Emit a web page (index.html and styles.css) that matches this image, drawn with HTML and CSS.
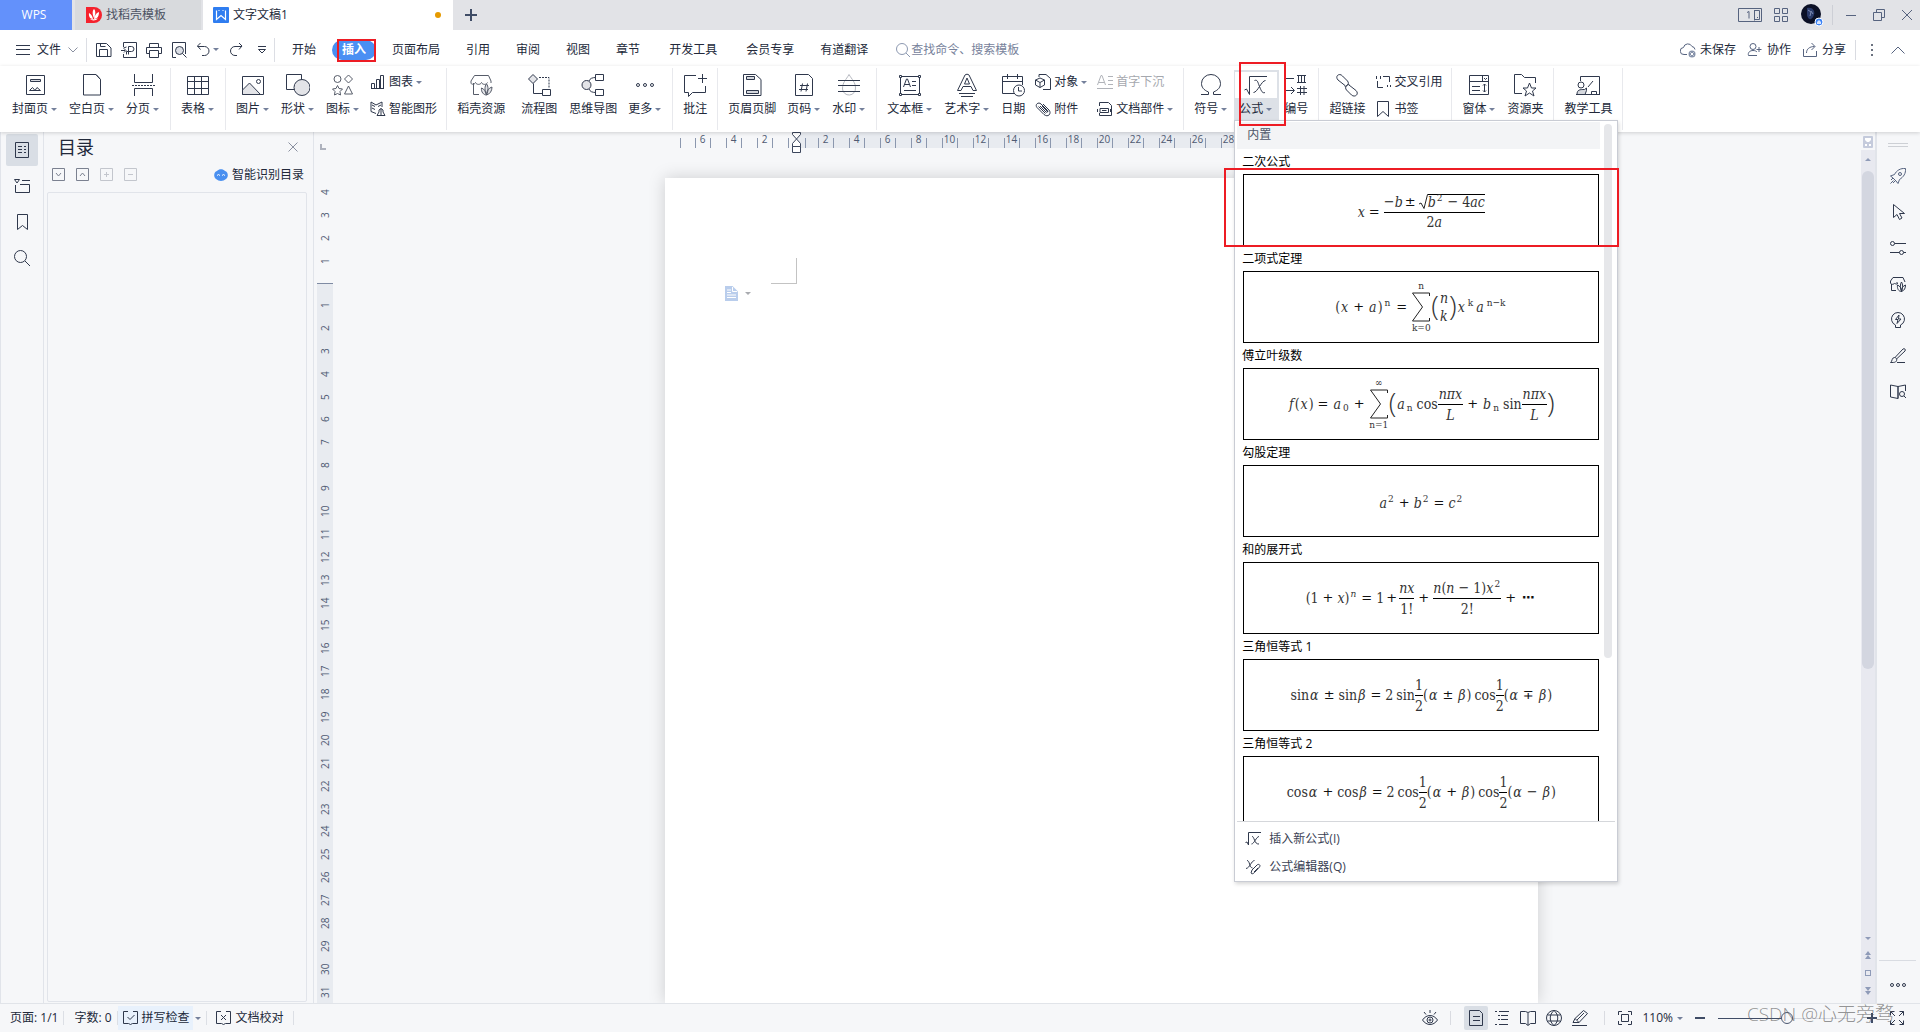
FILE: index.html
```html
<!DOCTYPE html>
<html lang="zh-CN">
<head>
<meta charset="utf-8">
<title>文字文稿1 - WPS</title>
<link rel="stylesheet" href="styles.css">
</head>
<body>
<header class="titlebar">
  <button class="home">WPS</button>
  <button class="tab tab-store">
    <svg class="logo" width="16" height="16" viewBox="0 0 16 16"><path fill="#f5222d" d="M0 0h8a8 8 0 0 1 0 16H0z"/><path fill="#fff" d="M8 2c2 2 1.500 6 0 9-1.500-3-2-7 0-9zM3 6c2 1 3.500 3 4 6-3 0-4.500-3-4-6zM13 5c0 4-1.500 7-5 7 .5-3 2-6 5-7zM4 12c1.500 2 6 2 8-.5-2 .5-5 1-8 .5z"/></svg>
    找稻壳模板
  </button>
  <button class="tab tab-doc">
    <svg class="logo" width="16" height="16" viewBox="0 0 16 16"><rect width="16" height="16" rx="1" fill="#2f7df0"/><path d="M3.500 3.500v9l4.500-4 4.500 4v-9M5.500 3.500h1m3 0h1" fill="none" stroke="#fff" stroke-width="1.200"/></svg>
    文字文稿1<span class="unsaved"></span>
  </button>
  <button class="plain newtab" aria-label="新建"><svg class="ic bold" width="12" height="12" viewBox="0 0 12 12"><path d="M6 0v12M0 6h12"/></svg></button>
  <div class="window-tools">
    <button class="plain" aria-label="窗口"><svg class="ic" width="24" height="14" viewBox="0 0 24 14"><path d="M.5.5h23v13H.5zM9 4.500l2-1v7M16.500 2v10.500M16.500 2.500h5v9h-5M19 9.500h1"/></svg></button>
    <button class="plain" aria-label="应用"><svg class="ic" width="14" height="14" viewBox="0 0 14 14"><path d="M.5.5h5v5h-5zM8.500.5h5v5h-5zM.5 8.500h5v5h-5zM8.500 8.500h5v5h-5z"/></svg></button>
    <button class="plain" aria-label="账号"><svg width="24" height="24" viewBox="0 0 24 24"><circle cx="11" cy="11" r="10" fill="#0b1026"/><path d="M7 5c3-1 6 0 7 3s-1 7-3 8-4-2-4-5z" fill="#2a3a6a"/><path d="M8 7l3 2-1 4M11 8l2 3" stroke="#7d8cb5" fill="none"/><circle cx="19" cy="19" r="4" fill="#3d83f5" stroke="#fff"/><path d="M17 21v-2l2-2 2 2v2z" fill="#d6e5ff"/></svg></button>
    <span class="sep"></span>
    <button class="plain" aria-label="最小化"><svg class="ic" width="12" height="12" viewBox="0 0 12 12"><path d="M1 6.500h10"/></svg></button>
    <button class="plain" aria-label="还原"><svg class="ic" width="12" height="12" viewBox="0 0 12 12"><path d="M.5 3.500h8v8h-8zM3.500 3V.5h8v8H9"/></svg></button>
    <button class="plain" aria-label="关闭"><svg class="ic" width="12" height="12" viewBox="0 0 12 12"><path d="M1 1l10 10M11 1L1 11"/></svg></button>
  </div>
</header>

<nav class="menubar">
  <button class="plain file"><svg class="ic" width="14" height="12" viewBox="0 0 14 12"><path d="M0 1.500h14M0 5.500h14M0 10.500h14"/></svg>文件<svg class="ic grey" width="10" height="6" viewBox="0 0 10 6"><path d="M.5.5L5 5 9.500.5"/></svg></button>
  <div class="quick">
    <button class="plain" aria-label="保存"><svg class="ic" width="16" height="16" viewBox="0 0 16 16"><path d="M.5 14.500V1.500h10l4.500 4.500v8.500zM4.500 1.500v3h5M3.500 14.500v-7h8v7"/></svg></button>
    <button class="plain" aria-label="输出为PDF"><svg class="ic" width="16" height="16" viewBox="0 0 16 16"><path d="M2.500 5V.5h13v15h-13V12M0 8.500h4M2.500 6l3-1M7.500 12.500v-8h3a2 2 0 0 1 0 5h-5v3M3 6.500l2 2-2 2"/></svg></button>
    <button class="plain" aria-label="打印"><svg class="ic" width="16" height="16" viewBox="0 0 16 16"><path d="M3.500 5V1.500h9V5M3.500 11.500h-3v-6h15v6h-3M3.500 8.500h9v7h-9z"/></svg></button>
    <button class="plain" aria-label="打印预览"><svg class="ic" width="16" height="16" viewBox="0 0 16 16"><path d="M5 15.500H1.500v-15h13V12"/><circle cx="8.500" cy="8.500" r="4" fill="#dcdfe6"/><path d="M11.500 11.500l4 4"/></svg></button>
    <button class="plain" aria-label="撤销"><svg class="ic" width="16" height="16" viewBox="0 0 16 16"><path d="M4.500 1l-3 3 3 3.500M1.500 4.500h7a4.500 4.500 0 0 1 0 9H6"/></svg></button>
    <span class="caret"></span>
    <button class="plain" aria-label="恢复"><svg class="ic" width="16" height="16" viewBox="0 0 16 16"><path d="M11 1l3 3-3 3.500M14 4.500H7a4.500 4.500 0 0 0 0 9h2"/></svg></button>
    <button class="plain" aria-label="自定义"><svg class="ic" width="10" height="8" viewBox="0 0 10 8"><path d="M1 .5h8M1.500 3.500L5 7l3.500-3.500z"/></svg></button>
  </div>
  <div class="menu-tabs">
    <button class="mtab">开始</button>
    <button class="mtab active"><span>插入</span></button>
    <button class="mtab">页面布局</button>
    <button class="mtab">引用</button>
    <button class="mtab">审阅</button>
    <button class="mtab">视图</button>
    <button class="mtab">章节</button>
    <button class="mtab roomy">开发工具</button>
    <button class="mtab">会员专享</button>
    <button class="mtab">有道翻译</button>
  </div>
  <label class="search"><svg class="ic" width="16" height="16" viewBox="0 0 16 16"><circle cx="7" cy="7" r="5.500"/><path d="M11 11l4 4"/></svg><input type="text" placeholder="查找命令、搜索模板" aria-label="查找命令"></label>
  <div class="share-tools">
    <button class="plain"><svg class="ic slate" width="16" height="16" viewBox="0 0 16 16"><path d="M7 12.500H4a3.500 3.500 0 0 1-.5-7 4.500 4.500 0 0 1 8.500-1 3.500 3.500 0 0 1 3 3"/><circle cx="12" cy="12" r="3.500" fill="#8793ab" stroke="none"/><path d="M10.500 10.500l3 3M13.500 10.500l-3 3" stroke="#fff"/></svg>未保存</button>
    <button class="plain"><svg class="ic slate" width="16" height="16" viewBox="0 0 16 16"><circle cx="6" cy="4.500" r="3"/><path d="M10 13.500H1.500c-1-3 1.500-5 4.500-5 2 0 3 .5 4 1.500M9.500 7.500h5M12 5v5"/></svg>协作</button>
    <button class="plain"><svg class="ic slate" width="16" height="16" viewBox="0 0 16 16"><path d="M1.500 7v7.500h13V9M4.500 11c0-4 3-6.500 8-6.500M9.500 1l3.500 3.500L9.500 8"/></svg>分享</button>
    <span class="sep"></span>
    <button class="plain" aria-label="更多"><svg width="10" height="14" viewBox="0 0 10 14" fill="#6b7280"><path d="M4 1h2v2H4zM4 6h2v2H4zM4 11h2v2H4z"/></svg></button>
    <button class="plain" aria-label="折叠"><svg class="ic slate" width="14" height="8" viewBox="0 0 14 8"><path d="M.5 7.500L7 1l6.500 6.500"/></svg></button>
  </div>
</nav>

<section class="ribbon">
  <div class="group">
    <button class="rb"><svg class="ic" width="24" height="24" viewBox="0 0 24 24"><path d="M3.500 2.500h18v19h-18z"/><path d="M7.500 6.500h10v2h-10z" fill="#d5d8de"/><path d="M6.500 17.500l3-3 2.500 3 2-3 3.500 3z"/></svg><span class="lb">封面页<i class="caret"></i></span></button>
    <button class="rb"><svg class="ic" width="24" height="24" viewBox="0 0 24 24"><path d="M3.500 1.500h12.500l4.500 5v15.500h-17zM16 1.500l4.500 5"/></svg><span class="lb">空白页<i class="caret"></i></span></button>
    <button class="rb"><svg class="ic" width="24" height="24" viewBox="0 0 24 24"><path d="M3.500 1v8.500h18V1M3.500 23v-7.500h18V23"/><path d="M1 12.500h23" stroke-dasharray="2 1"/></svg><span class="lb">分页<i class="caret"></i></span></button>
  </div>
  <div class="group">
    <button class="rb"><svg class="ic" width="24" height="24" viewBox="0 0 24 24"><path d="M1.500 3.500h21v18h-21zM1.500 8.500h21M1.500 15.500h21M8.500 8.500v13M15.500 3.500v18M8.500 3.500v5"/></svg><span class="lb">表格<i class="caret"></i></span></button>
  </div>
  <div class="group">
    <button class="rb"><svg class="ic" width="24" height="24" viewBox="0 0 24 24"><path d="M1.500 3.500h21v18h-21z"/><path d="M1.500 17l7-7 11 11.500h-18z" fill="#e3e4e8"/><circle cx="17.500" cy="8.500" r="2"/></svg><span class="lb">图片<i class="caret"></i></span></button>
    <button class="rb"><svg class="ic" width="24" height="24" viewBox="0 0 24 24"><path d="M.5 1.500h15v15H.5z"/><circle cx="16" cy="14.500" r="8" fill="#e3e4e8"/></svg><span class="lb">形状<i class="caret"></i></span></button>
    <button class="rb"><svg class="ic soft" width="24" height="24" viewBox="0 0 24 24"><circle cx="6.500" cy="6" r="3.500"/><path d="M17.500 2l4 4-4 4-4-4zM17.500 13l4 8h-8zM6.500 12.500l1.500 3 3.500.5-2.500 2.500.5 3.500-3-1.500-3 1.500.5-3.500L1.500 16l3.500-.5z"/></svg><span class="lb">图标<i class="caret"></i></span></button>
    <div class="stack">
      <button class="sb"><svg class="ic" width="16" height="16" viewBox="0 0 16 16"><path d="M1.500 9.500h3v5h-3zM6.500 5.500h3v9h-3zM10.500 1.500h3v13h-3zM14 14.500H1"/></svg>图表<i class="caret"></i></button>
      <button class="sb"><svg class="ic" width="16" height="16" viewBox="0 0 16 16"><path d="M6 12.500l-5-2V1l5 3 6-3v5M2 4l3 1.500M2 7l3 1.500M8 5.500L11 4"/><path d="M7 14.500l2-3.500v-2l2-1.500 2 1.500v2l2 3.500zM11 7.500v7"/></svg>智能图形</button>
    </div>
  </div>
  <div class="group">
    <button class="rb"><svg class="ic soft" width="24" height="24" viewBox="0 0 24 24"><path d="M10 21.500H4.500V10M22 10V8l-2.500-5.500h-14L2 8v2c0 1.500 3.500 2 4.500-.5 1 2.500 5 2.500 6 0 1 2.500 5 2.500 6 0"/><path d="M17.500 11c2 2 2 7 0 11-2-4-2-9 0-11zM12.500 15c3 1 4.500 4 5 7-3 0-5.500-3-5-7zM23 14c0 4-2 7-5.500 8 0-4 2-7 5.500-8z" fill="#e3e4e8"/></svg><span class="lb">稻壳资源</span></button>
    <button class="rb roomy"><svg class="ic" width="24" height="24" viewBox="0 0 24 24"><path d="M6 1.500l4.500 4.500L6 10.500 1.500 6z" fill="#e3e4e8"/><path d="M6.500 10.500v10h9M15.500 16.500h8v6h-8z"/><path d="M12 4.500h10v10" stroke-dasharray="2 1"/></svg><span class="lb">流程图</span></button>
    <button class="rb"><svg class="ic" width="24" height="24" viewBox="0 0 24 24"><circle cx="5.500" cy="12" r="4.500" fill="#e3e4e8"/><path d="M15 4.500c-4 0-6 1-7 3.500M15 19.500c-4 0-6-1-7-3.500M14.500 1.500h8v6h-8zM14.500 16.500h8v6h-8z"/></svg><span class="lb">思维导图</span></button>
    <button class="rb"><svg class="ic" width="24" height="24" viewBox="0 0 24 24"><circle cx="5" cy="12" r="1.500"/><circle cx="12" cy="12" r="1.500"/><circle cx="19" cy="12" r="1.500"/></svg><span class="lb">更多<i class="caret"></i></span></button>
  </div>
  <div class="group">
    <button class="rb"><svg class="ic" width="24" height="24" viewBox="0 0 24 24"><path d="M13 2.500H1.500v17h4v4l4-4h13V13M19.500 1v9M15 5.500h9"/></svg><span class="lb">批注</span></button>
  </div>
  <div class="group">
    <button class="rb"><svg class="ic" width="24" height="24" viewBox="0 0 24 24"><path d="M3.500 1.500h12l5.500 5v16H3.500z"/><path d="M6.500 3.500h8v3h-8zM6.500 17.500h12v3h-12z" fill="#d5d8de"/></svg><span class="lb">页眉页脚</span></button>
    <button class="rb"><svg class="ic" width="24" height="24" viewBox="0 0 24 24"><path d="M3.500 1.500h13l4 4v17h-17zM10.500 10.500l-1.500 8M15.500 10.500l-1.500 8M8 12.500h9M7 16.500h9"/></svg><span class="lb">页码<i class="caret"></i></span></button>
    <button class="rb"><svg class="ic" width="24" height="24" viewBox="0 0 24 24"><path d="M12 1.500c3 5 6.500 8 6.500 13.500a6.500 6.500 0 0 1-13 1C5.500 9 9 7 12 1.500z" stroke="#b5b8bf"/><path d="M1 7.500h22M1 12.500h22M1 18.500h22"/></svg><span class="lb">水印<i class="caret"></i></span></button>
  </div>
  <div class="group">
    <button class="rb"><svg class="ic" width="24" height="24" viewBox="0 0 24 24"><path d="M2.500 3.500h19v18h-19zM5.500 14l3-8h1l3 8M6.500 11.500h5M14 8.500h4M14 12.500h4M6 17.500h12"/><path d="M1.500 2.500h2v2h-2zM20.500 2.500h2v2h-2zM1.500 20.500h2v2h-2zM20.500 20.500h2v2h-2z" fill="#fff"/></svg><span class="lb">文本框<i class="caret"></i></span></button>
    <button class="rb"><svg class="ic" width="24" height="24" viewBox="0 0 24 24"><path d="M2.500 17.500L10 2c1-1 3-1 4 0l7.500 15.500h-3.500L16 13.500H8l-2 4zM9.500 11l2.500-6 2.500 6zM4 20.500h16M6 23.500h12"/></svg><span class="lb">艺术字<i class="caret"></i></span></button>
    <button class="rb"><svg class="ic" width="24" height="24" viewBox="0 0 24 24"><path d="M13 20.500H1.500v-17h20V12M1.500 8.500h20M6.500 1v5M16.500 1v5"/><circle cx="18" cy="17.500" r="5.500" fill="#fff"/><path d="M17.500 14v4h3.500"/></svg><span class="lb">日期</span></button>
    <div class="stack">
      <button class="sb"><svg class="ic" width="16" height="16" viewBox="0 0 16 16"><path d="M4 3V.5h7l4.500 4v11H8"/><path d="M5 4l4.500 2v5L5 13.500.5 11V6zM.5 6L5 8.500 9.500 6M5 8.500v5"/></svg>对象<i class="caret"></i></button>
      <button class="sb"><svg class="ic" width="16" height="16" viewBox="0 0 16 16"><path d="M5 5l6 6c1 1 2.500-.5 1.500-1.500L6 3C3.500.5-.5 3.500 2 6.500l7 7c4 3.500 8-1 5-4.500L8 3M3.500 5.500l7 7M7 5l6 6"/></svg>附件</button>
    </div>
    <div class="stack">
      <button class="sb" disabled><svg class="ic" width="16" height="16" viewBox="0 0 16 16"><path d="M.5 11L4 1.500h1L8.500 11M2 8.500h5M11 2.500h5M11 6.500h5M11 10.500h5M0 14.500h16"/></svg>首字下沉</button>
      <button class="sb"><svg class="ic" width="16" height="16" viewBox="0 0 16 16"><path d="M2.500 5V1.500h9l3 3v10h-12V12"/><path d="M3 7.500h8.500v4H3zM.5 8v3M13.500 8v3M5 9.500h4.500"/></svg>文档部件<i class="caret"></i></button>
    </div>
  </div>
  <div class="group">
    <button class="rb"><svg class="ic" width="24" height="24" viewBox="0 0 24 24"><path d="M2 21.500h7.500V19C4.500 17 2.500 14 2.500 10.500a9.500 9 0 0 1 19 0c0 3.500-2 6.500-7 8.500v2.500H22"/></svg><span class="lb">符号<i class="caret"></i></span></button>
    <div class="dropdown-host">
      <button class="rb open"><span class="ricon"><svg class="ic" width="24" height="24" viewBox="0 0 24 24"><path d="M.5 17l2-1 3 5.500V3.500H23M10.500 7.500c3-1 3 1 5 6s3 7 5.500 6M21.500 7.500c-4 0-8 12-12 12"/></svg></span><span class="lb">公式<i class="caret"></i></span></button>
      <div class="dropdown">
        <div class="gallery">
          <div class="gallery-list">
            <h2 class="gallery-head">内置</h2>
            <h3>二次公式</h3>
            <button class="formula low"><i>x</i><b>=</b><span class="frac"><span><b class="un">−</b><i>b</i><b class="tight">±</b><svg class="root" width="10" height="16" viewBox="0 0 10 16"><path d="M1 10l2-1 3 5.500L9.500.5h.5"/></svg><span class="radicand"><i>b</i><sup>2</sup><b>−</b>4<i>ac</i></span></span><span>2<i>a</i></span></span></button>
            <h3>二项式定理</h3>
            <button class="formula wide">(<i>x</i><b>+</b><i>a</i>)<sup>n</sup><b>=</b><span class="sum"><small>n</small><svg width="20" height="30" viewBox="0 0 20 30"><path d="M18.500 4V1H1.500l10 14L1.500 29h17v-3"/></svg><small>k=0</small></span><span class="paren">(</span><span class="binom"><i>n</i><i>k</i></span><span class="paren">)</span><i>x</i><sup>k</sup><i>a</i><sup>n−k</sup></button>
            <h3>傅立叶级数</h3>
            <button class="formula wide"><i>f</i>(<i>x</i>)<b>=</b><i>a</i><sub>0</sub><b>+</b><span class="sum"><small>∞</small><svg width="20" height="30" viewBox="0 0 20 30"><path d="M18.500 4V1H1.500l10 14L1.500 29h17v-3"/></svg><small>n=1</small></span><span class="paren">(</span><i>a</i><sub>n</sub><span class="fn">cos</span><span class="frac"><span><i>nπx</i></span><span><i>L</i></span></span><b>+</b><i>b</i><sub>n</sub><span class="fn">sin</span><span class="frac"><span><i>nπx</i></span><span><i>L</i></span></span><span class="paren">)</span></button>
            <h3>勾股定理</h3>
            <button class="formula low"><i>a</i><sup>2</sup><b>+</b><i>b</i><sup>2</sup><b>=</b><i>c</i><sup>2</sup></button>
            <h3>和的展开式</h3>
            <button class="formula">(1<b>+</b><i>x</i>)<sup><i>n</i></sup><b>=</b>1<b class="tight">+</b><span class="frac"><span><i>nx</i></span><span>1!</span></span><b>+</b><span class="frac"><span><i>n</i>(<i>n</i><b>−</b>1)<i>x</i><sup>2</sup></span><span>2!</span></span><b>+</b><b class="tight dots">⋯</b></button>
            <h3>三角恒等式 1</h3>
            <button class="formula wide">sin<i>α</i><b>±</b>sin<i>β</i><b>=</b>2<span class="fn">sin</span><span class="frac"><span>1</span><span>2</span></span>(<i>α</i><b>±</b><i>β</i>)<span class="fn">cos</span><span class="frac"><span>1</span><span>2</span></span>(<i>α</i><b>∓</b><i>β</i>)</button>
            <h3>三角恒等式 2</h3>
            <button class="formula wide">cos<i>α</i><b>+</b>cos<i>β</i><b>=</b>2<span class="fn">cos</span><span class="frac"><span>1</span><span>2</span></span>(<i>α</i><b>+</b><i>β</i>)<span class="fn">cos</span><span class="frac"><span>1</span><span>2</span></span>(<i>α</i><b>−</b><i>β</i>)</button>
          </div>
          <div class="gallery-scroll"><span></span></div>
        </div>
        <div class="dropdown-foot">
          <button><svg class="ic" width="16" height="16" viewBox="0 0 16 16"><path d="M.5 11.500l1.500-.5 1.500 3V1.500H16M7 5.500c2.500-.5 2 8 7 7.500M14 5.500c-2.500 0-5 7.500-7.500 7.500"/></svg>插入新公式(I)</button>
          <button><svg class="ic" width="16" height="16" viewBox="0 0 16 16"><path d="M2 1.500c3 0 2 7 5.500 7.500M9.500 1.500C6 2 5 9 1 9.500M6 14l1-3 5-5c1.500-1.500 4 0 2.500 2l-5 5.500c-1 1-2.500 2-3.500.5zM9 13l4-4"/></svg>公式编辑器(Q)</button>
        </div>
        <span class="mark mark-formula"></span>
      </div>
      <span class="mark mark-button"></span>
    </div>
    <button class="rb"><svg class="ic" width="24" height="24" viewBox="0 0 24 24"><path d="M1 5.500h9M1 17.500h9M7 14l3.500 3.500L7 21M13 2.500h9M13 9.500h9M14.500 2.500v7M17.500 2.500v7M20.500 2.500v7M16.500 13v9M20 13v9M13 15.500h10M13 19.500h10"/></svg><span class="lb">编号</span></button>
  </div>
  <div class="group">
    <button class="rb"><svg class="ic" width="24" height="24" viewBox="0 0 24 24"><path d="M10 12.500L3 7C-.5 3 4.500-.5 7.500 3l5 5c2.500 3-1 6-3 5M14 12l7 5.500c3.500 3.500-1 7.500-4.500 4.500l-5-5c-2.500-3 1-6.500 3-5"/></svg><span class="lb">超链接</span></button>
    <div class="stack">
      <button class="sb"><svg class="ic" width="16" height="16" viewBox="0 0 16 16"><path d="M1.500 2v2M5.500 2v2M1 4.500h1M5 4.500h1M2.500 7v6.500H8M8 2.500h6.500V8M12.500 11v2M15.500 11v2"/></svg>交叉引用</button>
      <button class="sb"><svg class="ic" width="16" height="16" viewBox="0 0 16 16"><path d="M2.500.5h11v15L8 10.500l-5.500 5z"/></svg>书签</button>
    </div>
  </div>
  <div class="group">
    <button class="rb"><svg class="ic" width="24" height="24" viewBox="0 0 24 24"><path d="M2.500 2.500h19v19h-19zM2.500 8.500h19M15.500 2.500v6M17 5l1.500 1.500L20 5M5 13.500h8M5 17.500h8M17.500 11v8M16 12.500l1.500-1.500 1.500 1.500M16 17.500l1.500 1.500 1.500-1.500"/></svg><span class="lb">窗体<i class="caret"></i></span></button>
    <button class="rb"><svg class="ic" width="24" height="24" viewBox="0 0 24 24"><path d="M9 20.500H1.500v-19h7l3 3h11V10M16.500 10l2 5h4.500l-3.500 3 1.500 5-4.500-3-4.500 3 1.500-5-3.500-3h4.500z"/></svg><span class="lb">资源夹</span></button>
  </div>
  <div class="group last">
    <button class="rb"><svg class="ic" width="24" height="24" viewBox="0 0 24 24"><path d="M4.500 8V3.500h19v18H10M12 14l5-6M15.500 21.500v-3h5v3M0 21.500h24"/><circle cx="5" cy="12" r="3"/><path d="M1 21.500c0-5 3-5 7.500-5l2-1.500v2.500l-1.500 4z" fill="#d5d8de"/></svg><span class="lb">教学工具</span></button>
  </div>
</section>

<main class="main">
  <aside class="left-rail">
    <button class="on" aria-label="目录"><svg class="ic" width="16" height="16" viewBox="0 0 16 16"><path d="M1.500.5h13v15h-13zM4 4.500h4M10 4.500h2M4 7.500h4M10 7.500h2M4 10.500h4M10 10.500h2"/></svg></button>
    <button aria-label="章节导航"><svg class="ic" width="16" height="16" viewBox="0 0 16 16"><path d="M.5 1.500h5L3 5zM8 2.500h8M1.500 7v7.500h14v-8H6"/></svg></button>
    <button aria-label="书签"><svg class="ic" width="16" height="16" viewBox="0 0 16 16"><path d="M3.500.5h10v15l-5-4-5 4z"/></svg></button>
    <button aria-label="查找"><svg class="ic" width="16" height="16" viewBox="0 0 16 16"><circle cx="6.500" cy="6.500" r="6"/><path d="M11 11l5 5"/></svg></button>
  </aside>
  <aside class="panel">
    <div class="panel-head"><h1>目录</h1><button class="plain" aria-label="关闭"><svg class="ic grey" width="10" height="10" viewBox="0 0 10 10"><path d="M.5.5l9 9M9.500.5l-9 9"/></svg></button></div>
    <div class="panel-tools">
      <button class="plain" aria-label="展开"><svg class="ic mid" width="14" height="14" viewBox="0 0 14 14"><path d="M.5.5h12v12H.5zM4 5l2.500 3L9 5"/></svg></button>
      <button class="plain" aria-label="收起"><svg class="ic mid" width="14" height="14" viewBox="0 0 14 14"><path d="M.5.5h12v12H.5zM4 8l2.500-3L9 8"/></svg></button>
      <button class="plain" aria-label="升级"><svg class="ic faint" width="14" height="14" viewBox="0 0 14 14"><path d="M.5.5h12v12H.5zM4 6.500h5M6.500 4v5"/></svg></button>
      <button class="plain" aria-label="降级"><svg class="ic faint" width="14" height="14" viewBox="0 0 14 14"><path d="M.5.5h12v12H.5zM4 6.500h5"/></svg></button>
      <button class="plain smart"><svg width="14" height="12" viewBox="0 0 14 12"><path d="M3 2c2-2.500 6-2.500 8 0 3 .5 4 6 1 8-3 2.500-7 2.500-10 0-3-2-2-7.500 1-8z" fill="#4a90f0"/><path d="M3 6.500l1.500-1 1.500 1M8 6.500l1.500-1 1.500 1" stroke="#fff" fill="none"/></svg>智能识别目录</button>
    </div>
    <div class="outline"></div>
  </aside>
  <section class="editor">
    <div class="vruler">
      <div class="vr-top"><span class="corner"></span><div class="vr-above"><span>4</span><span>3</span><span>2</span><span>1</span></div></div>
      <div class="vr-body"><span>1</span><span>2</span><span>3</span><span>4</span><span>5</span><span>6</span><span>7</span><span>8</span><span>9</span><span>10</span><span>11</span><span>12</span><span>13</span><span>14</span><span>15</span><span>16</span><span>17</span><span>18</span><span>19</span><span>20</span><span>21</span><span>22</span><span>23</span><span>24</span><span>25</span><span>26</span><span>27</span><span>28</span><span>29</span><span>30</span><span>31</span></div>
    </div>
    <div class="canvas">
      <div class="paper">
        <div class="hruler">
          <span class="hr-first"></span><span>6</span><span>4</span><span>2</span>
          <div class="hr-body"><svg class="indent" width="11" height="22" viewBox="0 0 11 22"><path d="M1.500.5h8v2l-4 4.500 4 4.500v3h-8v-3l4-4.500-4-4.500zM1.500 14.500h8v6h-8z"/></svg><span>2</span><span>4</span><span>6</span><span>8</span><span>10</span><span>12</span><span>14</span><span>16</span><span>18</span><span>20</span><span>22</span><span>24</span><span>26</span><span>28</span></div>
        </div>
        <article class="page">
          <div class="crop"></div>
          <button class="plain paste" aria-label="页面选项"><svg width="13" height="15" viewBox="0 0 13 15"><path d="M0 0h7.500L13 5.500V15H0z" fill="#b9cdec"/><path d="M2 4h4M2 6.500h4M2 9h9M2 11.500h9M7.500 1v4.500H12" stroke="#fff" fill="none"/></svg><i class="caret grey"></i></button>
        </article>
      </div>
    </div>
    <div class="vscroll">
      <svg width="12" height="14" viewBox="0 0 12 14"><rect x="1" y="1" width="10" height="12" rx="1" fill="#c5cbdc"/><path d="M3 3h6v2L7 7H5L3 5zM3 9h2v2H3zM7 9h2v2H7z" fill="#fff"/></svg>
      <div class="track">
        <svg width="8" height="5" viewBox="0 0 8 5"><path d="M1 4h6L4 1z"/></svg>
        <span class="thumb"></span>
        <div class="steps">
          <svg width="8" height="5" viewBox="0 0 8 5"><path d="M1 1h6L4 4z"/></svg>
          <svg width="8" height="8" viewBox="0 0 8 8"><path d="M1 4h6L4 0zM1 8h6L4 4z"/></svg>
          <svg width="8" height="8" viewBox="0 0 8 8"><rect x="1.500" y="1.500" width="5" height="5" fill="none" stroke="#8f9bb8"/></svg>
          <svg width="8" height="8" viewBox="0 0 8 8"><path d="M1 0h6L4 4zM1 4h6L4 8z"/></svg>
        </div>
      </div>
    </div>
  </section>
  <aside class="right-rail">
    <span class="grip"></span>
    <button aria-label="稻壳"><svg class="ic slate" width="16" height="16" viewBox="0 0 16 16"><path d="M15.500.5c.5 5-2 8.500-6 11L8 15.500l-2-2.500-3-3L.5 8l4-1.500c2-4 6-6.500 11-6zM1 12l2-2M3 15l2.500-2.500M.5 15.500l3-3"/><circle cx="10" cy="6" r="1.500"/></svg></button>
    <button aria-label="选择"><svg class="ic" width="16" height="16" viewBox="0 0 16 16"><path d="M3.500.5v13l3.500-3 2.500 5 2.500-1.500-2.500-4.500h5z"/></svg></button>
    <button aria-label="设置"><svg class="ic" width="16" height="16" viewBox="0 0 16 16"><circle cx="2.500" cy="3.500" r="2"/><circle cx="11.500" cy="12.500" r="2"/><path d="M4.500 3.500H16M0 12.500h9.500M13.500 12.500H16"/></svg></button>
    <button aria-label="稻壳资源"><svg class="ic" width="16" height="16" viewBox="0 0 16 16"><path d="M6 14.500H1.500V8M15 6l-2-4.500H3L.5 5v2c0 1.500 3.500 2 4 0M7 7.500V6M4.500 7c1 1.500 2.500 1.500 3.500 0"/><path d="M11.500 6c1.500 2 1.500 6 0 9.500-1.500-3.500-1.500-7.500 0-9.500zM7.500 9c2.500 1 4 3.500 4 6.500-3 0-4.500-3-4-6.500zM15.500 9c0 3-1 5.500-4 6.500 0-3 1-5.500 4-6.500z"/></svg></button>
    <button aria-label="灵感"><svg class="ic" width="16" height="16" viewBox="0 0 16 16"><path d="M5.500 15.500V13a6.500 6.500 0 1 1 5 0v2.500zM9 3L5.500 7.500H8L7 11.500 11 7H8.500z"/></svg></button>
    <button aria-label="画笔"><svg class="ic" width="16" height="16" viewBox="0 0 16 16"><path d="M5 9.500l8-8.500c1.500-1 3 .5 2 2L6.500 11M.5 14.500c2-1 1-5 4-5 2.500 0 3 3 1 4.500-1 .5-3 .5-5 .5zM7 14.500h8"/></svg></button>
    <button aria-label="阅读"><svg class="ic" width="16" height="16" viewBox="0 0 16 16"><path d="M8 2.500L.5 1v12L8 14.500V2.500L15.500 1v6M8 14.500V2.500"/><circle cx="12" cy="10" r="2.500"/><path d="M14 12l2 2"/></svg></button>
    <button class="more" aria-label="更多"><svg class="ic" width="16" height="6" viewBox="0 0 16 6"><circle cx="2" cy="3" r="1.500"/><circle cx="8" cy="3" r="1.500"/><circle cx="14" cy="3" r="1.500"/></svg></button>
  </aside>
</main>

<footer class="status">
  <div class="stat-left">
    <span>页面: 1/1</span><span>字数: 0</span>
    <button class="spell"><span class="hl"><svg class="ic" width="16" height="14" viewBox="0 0 16 14"><path d="M5 .5H.5v12h5l2 1 2-1h5V.5H10M4.500 6l2.500 2.500L11.500 4"/></svg>拼写检查</span><i class="caret"></i></button>
    <button><svg class="ic" width="16" height="14" viewBox="0 0 16 14"><path d="M5 .5H.5v12h5l2 1 2-1h5V.5H10M5 4l5 5M10 4L5 9"/></svg>文档校对</button>
  </div>
  <div class="stat-right">
    <button class="plain" aria-label="护眼"><svg class="ic" width="16" height="16" viewBox="0 0 16 16"><path d="M.5 10c4-6 11-6 15 0-4 6-11 6-15 0zM8 0v3M2 2l2 2.500M14 2l-2 2.500"/><circle cx="8" cy="10" r="3"/><circle cx="8" cy="10" r="1"/></svg></button>
    <span class="sep"></span>
    <div class="views">
      <button class="on" aria-label="页面视图"><svg class="ic" width="16" height="16" viewBox="0 0 16 16"><path d="M1.500.5h10l3 3v12h-13zM5 6.500h7M5 10.500h7"/></svg></button>
      <button aria-label="大纲"><svg class="ic" width="16" height="16" viewBox="0 0 16 16"><path d="M1 1.500h2M5 1.500h10M4 5.500h2M7 5.500h7M4 9.500h2M7 9.500h7M1 14.500h2M5 14.500h9"/></svg></button>
      <button aria-label="阅读版式"><svg class="ic" width="16" height="16" viewBox="0 0 16 16"><path d="M.5 1.500h5l2.500 1 2.500-1h5v12h-5l-2.500 2-2.500-2h-5zM8 3v12"/></svg></button>
      <button aria-label="Web版式"><svg class="ic" width="16" height="16" viewBox="0 0 16 16"><circle cx="8" cy="8" r="7.500"/><path d="M8 .5c-5 4-5 11 0 15 5-4 5-11 0-15M1.500 5h13M1.500 11h13"/></svg></button>
      <button aria-label="写作模式"><svg class="ic" width="16" height="16" viewBox="0 0 16 16"><path d="M1 12.500l2-4 8.500-8 4 3L7 12.500zM3 8.500l4 4M5 10l7-7M0 15.500h15"/></svg></button>
    </div>
    <span class="sep"></span>
    <button class="plain" aria-label="适合"><svg class="ic" width="14" height="14" viewBox="0 0 14 14"><path d="M.5 4V.5H4M10 .5h3.500V4M13.500 10v3.500H10M4 13.500H.5V10M3.500 3.500h7v7h-7z"/></svg></button>
    <button class="plain pct">110%<i class="caret"></i></button>
    <button class="plain" aria-label="缩小"><svg class="ic bold" width="10" height="10" viewBox="0 0 10 10"><path d="M0 5h10"/></svg></button>
    <input type="range" class="zoom" min="0" max="100" value="51" aria-label="缩放">
    <button class="plain" aria-label="放大"><svg class="ic bold" width="10" height="10" viewBox="0 0 10 10"><path d="M0 5h10M5 0v10"/></svg></button>
    <button class="plain full" aria-label="全屏"><svg class="ic" width="14" height="14" viewBox="0 0 14 14"><path d="M.5 4.500v-4h4M.5.5L5 5M9.500.5h4v4M13.500.5L9 5M13.500 9.500v4h-4M13.500 13.500L9 9M4.500 13.500h-4v-4M.5 13.500L5 9"/></svg></button>
    <span class="watermark">CSDN @心无旁骛</span>
  </div>
</footer>
</body>
</html>
```
FILE: styles.css
```css
* { box-sizing: border-box; }
body {
  margin: 0;
  min-height: 100vh;
  display: flex;
  flex-direction: column;
  background: #f6f7f9;
  color: #22293a;
  font: 12px/18px "Open Sans", "Noto Sans CJK SC", sans-serif;
  overflow: hidden;
}
button {
  font: inherit;
  color: inherit;
  background: none;
  border: 0;
  padding: 0;
  display: flex;
  align-items: center;
  white-space: nowrap;
}
svg { display: block; flex: none; }
h1, h2, h3 { margin: 0; font-weight: 400; }
.ic { fill: none; stroke: #2f384c; stroke-width: 1; }
.ic.bold { stroke: #3f4c66; stroke-width: 2; }
.ic.soft { stroke: #565c69; }
.ic.slate { stroke: #56637f; }
.ic.grey { stroke: #8a90a0; }
.ic.mid { stroke: #7b8190; }
.ic.faint { stroke: #c3c6cd; }
.sep { width: 1px; background: #d9dbe1; flex: none; }
.caret {
  border: 3px solid transparent;
  border-top-color: #74809b;
  border-bottom: 0;
  flex: none;
}
.caret.grey { border-top-color: #a9abb0; }
.mark { position: absolute; border: 2px solid #ed1c24; pointer-events: none; z-index: 5; }

/* Title bar */
.titlebar { display: flex; height: 30px; background: #e2e3e7; color: #22293a; }
.home { width: 72px; padding-right: 4px; justify-content: center; background: #6391fb; color: #fff; }
.tab { gap: 4px; }
.tab-store { width: 126px; margin: 0 2px 0 3px; padding-left: 11px; background: #d8dadd; color: #4c5263; }
.tab-doc { width: 250px; padding: 0 12px 0 10px; background: #fff; }
.unsaved { width: 6px; height: 6px; border-radius: 50%; background: #e69a00; margin-left: auto; }
.newtab { margin-left: 12px; }
.window-tools { display: flex; align-items: center; gap: 12px; margin-left: auto; padding-right: 7px; }
.window-tools .ic { stroke: #56637f; }
.window-tools .sep { height: 20px; background: #cdcfd6; margin-left: -4px; }
.window-tools > :nth-last-child(-n+2) { margin-left: 4px; }

/* Menu bar */
.menubar { display: flex; align-items: center; height: 36px; padding-top: 3px; background: #fff; }
.file { gap: 7px; padding: 0 8px 0 16px; }
.quick { display: flex; align-items: center; gap: 9px; padding: 0 7px 0 9px; border: solid #dcdee4; border-width: 0 1px; height: 24px; }
.quick .caret { margin-left: -8px; }
.quick > :last-child { margin-left: 4px; }
.menu-tabs { display: flex; padding-left: 4px; }
.mtab { position: relative; padding: 0 13px; }
.mtab.roomy { padding: 0 16px; }
.mtab.active { color: #fff; font-weight: 700; }
.mtab.active span { background: #4a8ff3; border-radius: 10px; padding: 1px 10px; margin: 0 -10px; }
.mtab.active::after { content: ""; position: absolute; inset: -1px 3px -2px 8px; border: 2px solid #ed1c24; }
.search { display: flex; align-items: center; padding-left: 14px; flex: 1; }
.search .ic { stroke: #8d99b1; stroke-width: 1; }
.search input { border: 0; outline: 0; padding: 0; width: 160px; font: inherit; background: none; }
.search input::placeholder { color: #77829b; opacity: 1; }
.share-tools { display: flex; align-items: center; gap: 11px; padding-right: 15px; }
.share-tools button { gap: 4px; }
.share-tools .sep { height: 20px; margin-left: -2px; }
.share-tools > :last-child { margin-left: 3px; }

/* Ribbon */
.ribbon { display: flex; padding: 2px 0 2px 2px; background: #fff; box-shadow: 0 1px 4px rgba(0, 0, 0, .16); position: relative; z-index: 2; }
.group { display: flex; align-items: flex-start; padding: 2px 4px 10px 5px; border-right: 1px solid #e8e9ed; }
.rb { flex-direction: column; gap: 3px; height: 50px; padding: 3px 6px 0 5px; }
.rb.roomy { padding: 3px 7px 0 10px; }
.lb { display: flex; align-items: center; gap: 3px; }
.lb .caret, .sb .caret { margin-right: 1px; }
.stack { display: flex; flex-direction: column; gap: 9px; padding: 3px 5px 0 4px; }
.sb { gap: 3px; height: 18px; }
.sb:disabled { color: #a5a8ae; }
.sb:disabled .ic { stroke: #b0b3b9; }
.dropdown-host { position: relative; }
.rb.open { background: #dde1e7; padding-top: 2px; gap: 2px; }
.ricon { background: #fff; padding: 1px 9px; margin: 0 -4px; }
.mark-button { inset: -8px -7px -6px 5px; }

/* Formula gallery */
.dropdown { position: absolute; top: 50px; left: 0; z-index: 4; width: 384px; background: #fff; border: 1px solid #c9ccd4; box-shadow: 1px 2px 4px rgba(0, 0, 0, .16); color: #000; }
.gallery { display: flex; gap: 1px; margin: 1px 2px 0; height: 700px; border-bottom: 1px solid #d5d7db; overflow: hidden; }
.gallery-list { flex: 1; }
.gallery-head { height: 27px; padding: 0 0 0 10px; background: #f3f4f6; color: #4f5668; font-size: 12px; line-height: 26px; }
.gallery-list h3 { padding: 1px 0 0 5px; font-size: 12px; line-height: 24px; }
.formula { width: 356px; height: 72px; margin-left: 6px; border: 1px solid #000; justify-content: center; font: 14px/18px "DejaVu Serif Condensed", "DejaVu Serif", serif; color: #333; }
.formula.low { padding-top: 3px; }
.formula.wide i { padding: 0 1px; }
.formula b { font: 13px/18px "DejaVu Sans", sans-serif; padding: 0 4px; color: #111; }
.formula b.tight { padding: 0 2px; }
.formula b.un { padding: 0; }
.formula b.dots { font-weight: 700; }
.formula sup, .formula sub { font-size: 10px; line-height: 12px; vertical-align: baseline; padding: 0 1px; }
.formula.wide sup { padding: 0 2px; }
.formula sup, .formula.wide sup { padding-bottom: 8px; }
.formula sub { padding-top: 8px; }
.formula .fn { padding-left: 3px; }
.frac { display: flex; flex-direction: column; align-items: stretch; }
.frac > span { display: flex; justify-content: center; align-items: center; height: 20px; }
.frac > span + span { border-top: 1px solid #000; }
.root, .sum svg { fill: none; stroke: #222; }
.radicand { display: flex; align-items: center; height: 16px; border-top: 1px solid #000; }
.sum { display: flex; flex-direction: column; align-items: center; }
.sum small { font-size: 10px; line-height: 12px; }
.paren { font: 300 28px/30px "Open Sans", sans-serif; padding-bottom: 4px; }
.binom { display: flex; flex-direction: column; }
.gallery-scroll { width: 14px; padding: 2px 3px 0; }
.gallery-scroll span { display: block; height: 534px; width: 8px; border-radius: 4px; background: #e6e7ea; }
.dropdown-foot { padding: 3px 0 0 10px; color: #3a4254; }
.dropdown-foot button { height: 28px; gap: 8px; }
.mark-formula { inset: 47px -2px auto -11px; height: 79px; }

/* Main area */
.main { display: flex; flex: 1; border-bottom: 1px solid #e1e4e9; }
.left-rail { width: 44px; padding: 2px 5px; border: solid #e1e4ea; border-width: 0 1px; display: flex; flex-direction: column; gap: 4px; }
.left-rail button { width: 32px; height: 32px; justify-content: center; border-radius: 2px; }
.left-rail button.on { background: #d9dee5; }
.panel { width: 270px; padding: 3px 6px 1px 3px; border-right: 1px solid #e1e4ea; display: flex; flex-direction: column; }
.panel-head { display: flex; justify-content: space-between; align-items: center; height: 24px; padding: 0 9px 0 11px; }
.panel-head h1 { font-size: 18px; line-height: 24px; }
.panel-tools { display: flex; gap: 10px; height: 33px; align-items: center; padding: 0 3px 2px 5px; }
.smart { margin-left: auto; gap: 4px; }
.outline { flex: 1; border: 1px solid #e1e4ea; border-radius: 2px; }
.editor { flex: 1; display: flex; min-width: 0; }
.vruler { width: 19px; padding: 0 0 0 3px; display: flex; flex-direction: column; color: #4f5a72; font-size: 10px; line-height: 10px; }
.vr-top { height: 151px; padding: 12px 0 0 3px; }
.corner { display: block; width: 6px; height: 6px; border: solid #aeb2bd; border-width: 0 0 2px 2px; }
.vr-above { display: flex; flex-direction: column; gap: 13px; padding-top: 37px; margin-left: -3px; }
.vruler span:not(.corner) { writing-mode: vertical-rl; transform: rotate(180deg); height: 10px; width: 16px; line-height: 16px; display: flex; justify-content: center; }
.vr-body { flex: 1; display: flex; flex-direction: column; justify-content: space-between; padding: 16px 0 6px; border-top: 1px solid #7f8ba3; background: #e8ebf0; }
.canvas { flex: 1; display: flex; justify-content: center; padding-left: 8px; overflow: hidden; }
.paper { width: 873px; display: flex; flex-direction: column; }
.hruler { display: flex; height: 16px; padding-left: 15px; color: #4f5a72; font-size: 10px; line-height: 15px; }
.hruler span { width: 31px; flex: none; text-align: center; padding-right: 15px; background: linear-gradient(#8b97ae, #8b97ae) 0 6px / 1px 10px no-repeat, linear-gradient(#8b97ae, #8b97ae) 15px 6px / 1px 10px no-repeat; }
.hruler .hr-first { width: 15px; padding: 0; background: linear-gradient(#8b97ae, #8b97ae) 0 6px / 1px 10px no-repeat; }
.hr-body { display: flex; flex: 1; padding-left: 30px; background: linear-gradient(90deg, transparent 8px, #e8ebf0 8px); position: relative; }
.hr-body::before { content: ""; position: absolute; left: 0; top: 6px; width: 16px; height: 10px; border: solid #8b97ae; border-width: 0 1px; }
.indent { position: absolute; left: 3px; top: 0; z-index: 1; fill: #fff; stroke: #3c465c; }
.page { flex: 1; margin-top: 30px; padding: 80px 0 0 60px; background: #fff; box-shadow: 0 0 16px rgba(0, 0, 0, .17); clip-path: inset(-16px -16px 0 -16px); }
.crop { width: 26px; height: 26px; margin-left: 46px; border: solid #c3c3c3; border-width: 0 1px 1px 0; }
.paste { gap: 7px; margin-top: 2px; }
.vscroll { width: 16px; display: flex; flex-direction: column; align-items: center; padding-top: 3px; border-right: 2px solid #e1e4ea; }
.track { flex: 1; width: 14px; margin-top: 1px; padding: 7px 1px 8px; display: flex; flex-direction: column; align-items: center; background: #e8e9f0; fill: #8f9bb8; }
.thumb { width: 12px; height: 498px; margin-top: 9px; border-radius: 6px; background: #d3d6e0; }
.steps { margin-top: auto; display: flex; flex-direction: column; gap: 10px; }
.right-rail { width: 43px; padding-right: 2px; display: flex; flex-direction: column; align-items: center; }
.right-rail button { height: 36px; }
.grip { width: 20px; height: 4px; margin: 11px 0 11px; border: solid #cdd0d5; border-width: 1px 0; }
.right-rail .more { margin-top: auto; height: 43px; width: 37px; justify-content: center; border-top: 1px solid #d9dce2; padding-top: 6px; }

/* Status bar */
.status { display: flex; justify-content: space-between; height: 28px; }
.stat-left { display: flex; align-items: center; }
.stat-left > * { padding: 0 9px; border-right: 1px solid #dcdfe5; height: 14px; display: flex; align-items: center; gap: 4px; }
.stat-left > span { padding: 0 5px 0 10px; }
.stat-left > .spell { padding: 0 5px 0 0; gap: 2px; }
.hl { display: flex; align-items: center; gap: 3px; height: 24px; padding: 0 3px 0 5px; background: #e8f1fc; }
.stat-right { position: relative; display: flex; align-items: center; gap: 10px; padding-right: 16px; }
.stat-right > .sep { height: 14px; margin: 0 3px 0 2px; }
.views { display: flex; gap: 2px; }
.views button { width: 24px; height: 24px; justify-content: center; border-radius: 2px; }
.views .on { background: #d9dee5; }
.pct { gap: 4px; margin-right: 2px; }
.full { margin-left: 3px; }
.zoom { appearance: none; width: 136px; height: 12px; margin: 0 3px; background: linear-gradient(90deg, #3f4c66 52%, #d5d8e0 52%) center / 100% 1px no-repeat; }
.zoom::-webkit-slider-thumb { appearance: none; width: 12px; height: 12px; border: 1px solid #4c5770; border-radius: 50%; background: #f6f7f9; }
.watermark { position: absolute; right: 26px; top: -3px; font-size: 19px; line-height: 26px; font-weight: 300; color: rgba(90, 90, 90, .65); white-space: nowrap; pointer-events: none; }
```
